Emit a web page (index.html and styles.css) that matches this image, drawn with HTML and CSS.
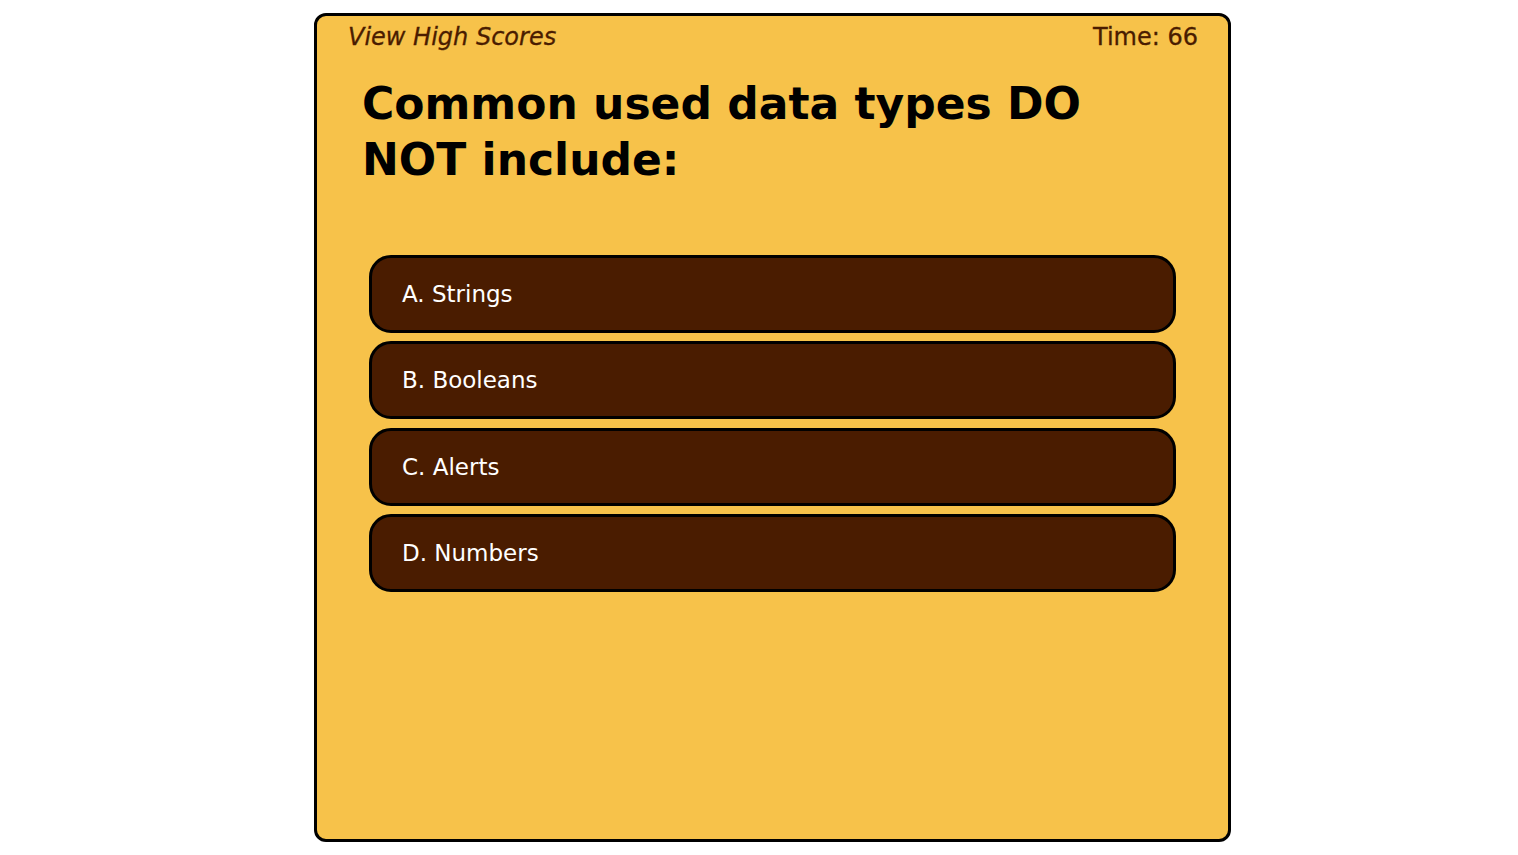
FILE: index.html
```html
<!DOCTYPE html>
<html lang="en">
<head>
<meta charset="utf-8">
<title>Code Quiz</title>
<link rel="stylesheet" href="styles.css">
</head>
<body>
<main class="quiz">
  <header class="topbar">
    <a class="scores-link" href="#">View High Scores</a>
    <span class="timer">Time: 66</span>
  </header>
  <h1 class="question">Common used data types DO NOT include:</h1>
  <div class="choices">
    <button class="choice">A. Strings</button>
    <button class="choice">B. Booleans</button>
    <button class="choice">C. Alerts</button>
    <button class="choice">D. Numbers</button>
  </div>
</main>
</body>
</html>
```
FILE: styles.css
```css
* { box-sizing: border-box; }
html, body { margin: 0; padding: 0; background: #ffffff; }
body {
  font-family: "DejaVu Sans", "Noto Sans", sans-serif;
  padding: 13px 0 0 27px;
}
.quiz {
  width: 917px;
  height: 829px;
  margin: 0 auto;
  background: #f7c24a;
  border: 3px solid #000;
  border-radius: 12px;
  padding: 0 30px 0 31px;
  display: flex;
  flex-direction: column;
}
.topbar {
  display: flex;
  justify-content: space-between;
  align-items: center;
  height: 42px;
}
.scores-link {
  font-style: italic;
  font-size: 24px;
  color: #4a1c00;
  text-decoration: none;
  -webkit-text-stroke: 0.3px #4a1c00;
}
.timer {
  font-size: 24px;
  color: #4a1c00;
  -webkit-text-stroke: 0.3px #4a1c00;
}
.question {
  margin: 0;
  padding: 18px 90px 0 14px;
  font-size: 44px;
  font-weight: bold;
  line-height: 56px;
  color: #000;
}
.choices {
  margin-top: 67px;
  padding: 0 22px 0 21px;
  display: flex;
  flex-direction: column;
  gap: 8.33px;
}
.choice {
  height: 78px;
  width: 100%;
  background: #4a1c00;
  border: 3px solid #000;
  border-radius: 22px;
  color: #fff;
  font-family: inherit;
  font-size: 23px;
  text-align: left;
  padding: 0 0 0 30px;
  cursor: pointer;
}
```
